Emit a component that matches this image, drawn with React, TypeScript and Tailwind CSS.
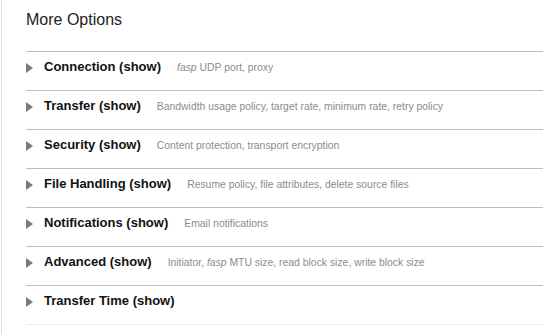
import React from 'react'

interface Section {
  title: string
  desc: React.ReactNode
}

const sections: Section[] = [
  { title: 'Connection', desc: <><i>fasp</i> UDP port, proxy</> },
  { title: 'Transfer', desc: 'Bandwidth usage policy, target rate, minimum rate, retry policy' },
  { title: 'Security', desc: 'Content protection, transport encryption' },
  { title: 'File Handling', desc: 'Resume policy, file attributes, delete source files' },
  { title: 'Notifications', desc: 'Email notifications' },
  { title: 'Advanced', desc: <>Initiator, <i>fasp</i> MTU size, read block size, write block size</> },
  { title: 'Transfer Time', desc: '' },
]

function Arrow() {
  return (
    <svg width="7" height="10" viewBox="0 0 7 10" className="mt-[4px] shrink-0">
      <path d="M0 0 L7 5 L0 10 Z" fill="#7a7a7a" />
    </svg>
  )
}

export default function App() {
  return (
    <div className="w-[543px] h-[334px] bg-white overflow-hidden font-['Liberation_Sans',Arial,sans-serif]">
      <div className="ml-px h-full border-l border-[#dedede] pl-6">
        <h2 className="pt-[10px] text-[16px] leading-[20px] text-[#222]">More Options</h2>
        <div className="mt-[21px]">
          {sections.map((s) => (
            <div key={s.title} className="h-[39px] border-t border-[#bdbdbd] flex items-start pt-[7px]">
              <Arrow />
              <span className="ml-[11px] text-[13px] leading-[16px] font-bold text-[#111] whitespace-nowrap">
                {s.title} (show)
              </span>
              {s.desc && (
                <span className="ml-4 mt-[2px] text-[10.4px] leading-[14px] text-[#8c8c8c] whitespace-nowrap">
                  {s.desc}
                </span>
              )}
            </div>
          ))}
          <div className="border-t border-[#ececec]" />
        </div>
      </div>
    </div>
  )
}
